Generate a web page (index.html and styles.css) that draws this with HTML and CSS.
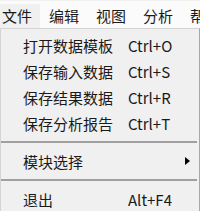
FILE: index.html
```html
<!DOCTYPE html>
<html lang="zh-CN">
<head>
<meta charset="utf-8">
<link rel="stylesheet" href="styles.css">
</head>
<body>
<div class="menubar">
  <div class="top active">文件</div>
  <div class="top">编辑</div>
  <div class="top">视图</div>
  <div class="top">分析</div>
  <div class="top">帮</div>
</div>
<div class="dropdown">
  <div class="item"><span class="label">打开数据模板</span><span class="key">Ctrl+O</span></div>
  <div class="item"><span class="label">保存输入数据</span><span class="key">Ctrl+S</span></div>
  <div class="item"><span class="label">保存结果数据</span><span class="key">Ctrl+R</span></div>
  <div class="item"><span class="label">保存分析报告</span><span class="key">Ctrl+T</span></div>
  <div class="sep"></div>
  <div class="item"><span class="label">模块选择</span><span class="arrow"></span></div>
  <div class="sep"></div>
  <div class="item"><span class="label">退出</span><span class="key">Alt+F4</span></div>
</div>
</body>
</html>
```
FILE: styles.css
```css
html, body {
  margin: 0;
  padding: 0;
  background: #ffffff;
  width: 200px;
  height: 211px;
  overflow: hidden;
  font-family: "Noto Sans CJK SC", "Noto Sans", sans-serif;
  font-size: 15px;
  color: #1a1a1a;
}
.menubar {
  display: flex;
  height: 28px;
  box-sizing: border-box;
  padding-top: 3px;
  background: #fbfbfb;
  border-top: 1px solid #f0f0f0;
  overflow: hidden;
}
.top {
  height: 24px;
  line-height: 24px;
  padding: 0 8px 0 9px;
  white-space: nowrap;
  flex-shrink: 0;
}
.top:first-child {
  padding-left: 2px;
}
.top:last-child {
  padding-right: 0;
}
.top.active {
  background: #f0f0f0;
}
.dropdown {
  box-sizing: border-box;
  width: 200px;
  height: 183px;
  background: #f0f0f0;
  border-top: 1px solid #d4d4d4;
  border-left: 1px solid #d4d4d4;
  border-right: 1px solid #a8a8a8;
  padding-top: 3px;
  display: flex;
  flex-direction: column;
}
.item {
  height: 26px;
  display: flex;
  align-items: center;
  padding-left: 22px;
  flex-shrink: 0;
}
.label {
  width: 105px;
  white-space: nowrap;
}
.key {
  white-space: nowrap;
}
.arrow {
  margin-left: 57px;
  width: 0;
  height: 0;
  border-top: 4.5px solid transparent;
  border-bottom: 4.5px solid transparent;
  border-left: 5px solid #000;
}
.sep {
  height: 12px;
  flex-shrink: 0;
  display: flex;
  align-items: center;
}
.sep::before {
  content: "";
  display: block;
  width: 196px;
  height: 2px;
  background: #a0a0a0;
}
```
